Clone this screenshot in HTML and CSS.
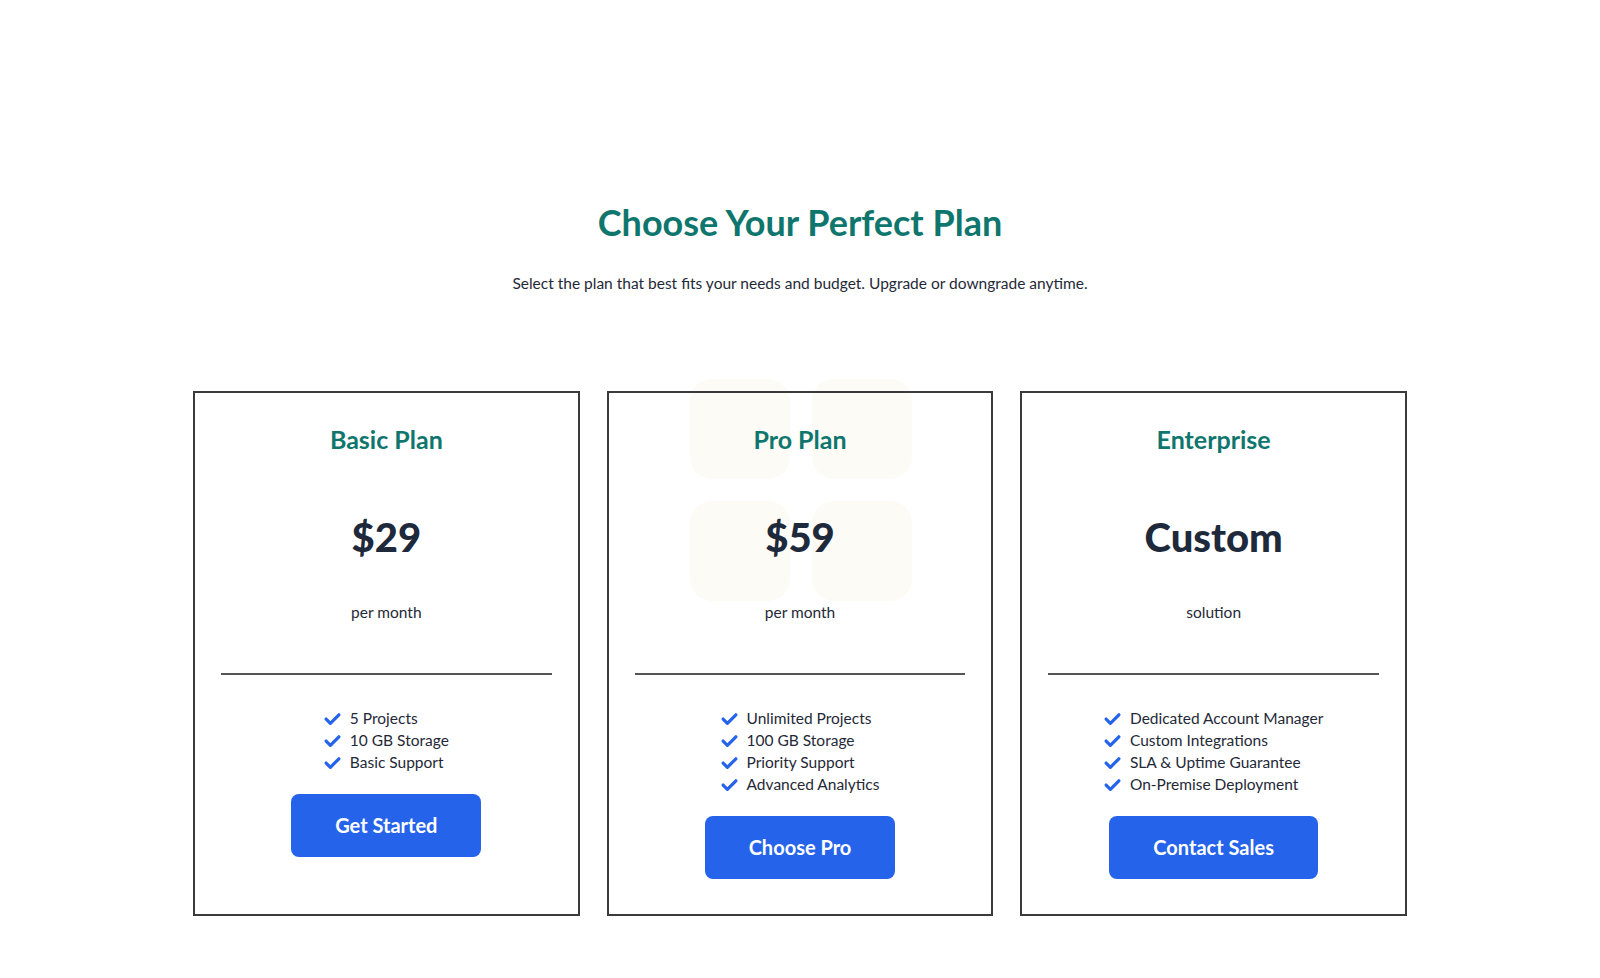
FILE: index.html
```html
<!DOCTYPE html>
<html lang="en">
<head>
<meta charset="utf-8">
<title>Choose Your Perfect Plan</title>
<link rel="stylesheet" href="styles.css">
</head>
<body>
<main class="pricing">
  <header class="pricing-head">
    <h1 class="pricing-title">Choose Your Perfect Plan</h1>
    <p class="pricing-sub">Select the plan that best fits your needs and budget. Upgrade or downgrade anytime.</p>
  </header>
  <section class="plans">
    <article class="plan">
      <h3 class="plan-name">Basic Plan</h3>
      <div class="plan-price">$29</div>
      <div class="plan-period">per month</div>
      <hr class="plan-divider">
      <ul class="plan-features">
        <li><svg class="check" viewBox="0 0 16 16"><path d="M2 8.5l4 4L14 4.5"/></svg>5 Projects</li>
        <li><svg class="check" viewBox="0 0 16 16"><path d="M2 8.5l4 4L14 4.5"/></svg>10 GB Storage</li>
        <li><svg class="check" viewBox="0 0 16 16"><path d="M2 8.5l4 4L14 4.5"/></svg>Basic Support</li>
      </ul>
      <div class="plan-action"><a class="btn btn-basic" href="#">Get Started</a></div>
    </article>
    <article class="plan plan-pro">
      <div class="deco" aria-hidden="true"><span></span><span></span><span></span><span></span></div>
      <h3 class="plan-name">Pro Plan</h3>
      <div class="plan-price">$59</div>
      <div class="plan-period">per month</div>
      <hr class="plan-divider">
      <ul class="plan-features">
        <li><svg class="check" viewBox="0 0 16 16"><path d="M2 8.5l4 4L14 4.5"/></svg>Unlimited Projects</li>
        <li><svg class="check" viewBox="0 0 16 16"><path d="M2 8.5l4 4L14 4.5"/></svg>100 GB Storage</li>
        <li><svg class="check" viewBox="0 0 16 16"><path d="M2 8.5l4 4L14 4.5"/></svg>Priority Support</li>
        <li><svg class="check" viewBox="0 0 16 16"><path d="M2 8.5l4 4L14 4.5"/></svg>Advanced Analytics</li>
      </ul>
      <div class="plan-action"><a class="btn btn-pro" href="#">Choose Pro</a></div>
    </article>
    <article class="plan">
      <h3 class="plan-name">Enterprise</h3>
      <div class="plan-price">Custom</div>
      <div class="plan-period">solution</div>
      <hr class="plan-divider">
      <ul class="plan-features">
        <li><svg class="check" viewBox="0 0 16 16"><path d="M2 8.5l4 4L14 4.5"/></svg>Dedicated Account Manager</li>
        <li><svg class="check" viewBox="0 0 16 16"><path d="M2 8.5l4 4L14 4.5"/></svg>Custom Integrations</li>
        <li><svg class="check" viewBox="0 0 16 16"><path d="M2 8.5l4 4L14 4.5"/></svg>SLA &amp; Uptime Guarantee</li>
        <li><svg class="check" viewBox="0 0 16 16"><path d="M2 8.5l4 4L14 4.5"/></svg>On-Premise Deployment</li>
      </ul>
      <div class="plan-action"><a class="btn btn-ent" href="#">Contact Sales</a></div>
    </article>
  </section>
</main>
</body>
</html>
```

FILE: styles.css
```css
* { box-sizing: border-box; }

html {
  background: #ffffff;
}

html, body {
  margin: 0;
  padding: 0;
}

body {
  font-family: "Lato", "Noto Sans", "DejaVu Sans", sans-serif;
  color: #1f2937;
}

.pricing {
  padding-top: 202px;
  padding-bottom: 60px;
}

.pricing-head {
  text-align: center;
}

.pricing-title {
  margin: 0;
  font-size: 36px;
  line-height: 41px;
  font-weight: 700;
  color: #0f766e;
}

.pricing-sub {
  margin: 29px 0 0;
  font-size: 15.5px;
  line-height: 22px;
  color: #1f2937;
}

.plans {
  width: 1214px;
  margin: 97px auto 0;
  display: grid;
  grid-template-columns: repeat(3, 1fr);
  gap: 27px;
}

.plan {
  position: relative;
  border: 2px solid #3a3a3a;
  padding: 31px 26px 35px;
  text-align: center;
}

.plan-name {
  margin: 0;
  font-size: 25px;
  line-height: 30px;
  font-weight: 700;
  color: #0f766e;
}

.plan-price {
  margin-top: 59px;
  font-size: 40px;
  line-height: 48px;
  font-weight: 900;
  color: #1e293b;
}

.plan-period {
  margin-top: 40px;
  font-size: 15.5px;
  line-height: 22px;
  color: #1f2937;
}

.plan-divider {
  margin: 50px 0 0;
  border: 0;
  height: 2px;
  background: #555555;
}

.plan-features {
  display: inline-block;
  margin: 32px 0 0;
  padding: 0;
  list-style: none;
  text-align: left;
}

.plan-features li {
  display: flex;
  align-items: center;
  gap: 9px;
  font-size: 15.5px;
  line-height: 22px;
  color: #1f2937;
}

.check {
  width: 17px;
  height: 17px;
  flex: none;
  fill: none;
  stroke: #2563eb;
  stroke-width: 3;
  stroke-linecap: round;
  stroke-linejoin: round;
}

.plan-action {
  margin-top: 20px;
}

.btn {
  display: inline-block;
  padding: 19px 44px;
  border-radius: 8px;
  background: #2563eb;
  color: #ffffff;
  font-size: 20px;
  line-height: 25px;
  font-weight: 700;
  text-decoration: none;
}

.deco {
  position: absolute;
  left: 81px;
  top: -14px;
  width: 223px;
  display: grid;
  grid-template-columns: 100px 100px;
  gap: 22px;
  z-index: -1;
  pointer-events: none;
}

.deco span {
  display: block;
  height: 100px;
  border-radius: 22px;
  background: #fcfbf5;
}
```
